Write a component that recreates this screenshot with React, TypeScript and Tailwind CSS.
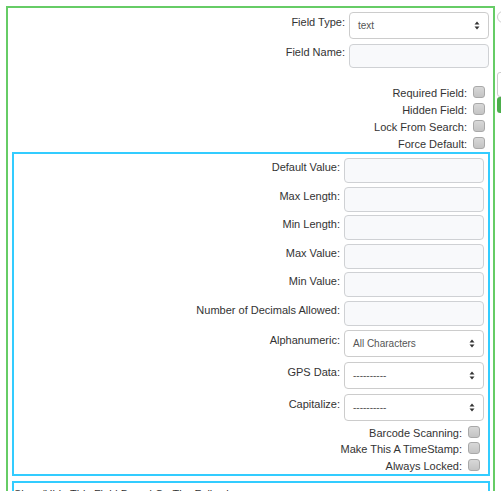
import React from "react";

const font = { fontFamily: '"Liberation Sans", Arial, sans-serif' };

function Arrow() {
  return (
    <svg width="6" height="9" viewBox="0 0 6 9" className="shrink-0">
      <path d="M3 0.5 L5.5 3.5 L0.5 3.5 Z" fill="#333" />
      <path d="M3 8.5 L5.5 5.5 L0.5 5.5 Z" fill="#333" />
    </svg>
  );
}

function Select({ value, h = "h-[27.5px]" }: { value: string; h?: string }) {
  return (
    <div
      className={`w-[140px] ${h} shrink-0 bg-white border border-[#cccccc] rounded-[4px] flex items-center justify-between pl-[8px] pr-[8px] text-[10px] text-[#555]`}
    >
      <span>{value}</span>
      <Arrow />
    </div>
  );
}

function Input() {
  return (
    <div className="w-[140px] h-[25px] shrink-0 bg-[#f8f9fb] border border-[#cfd1d4] rounded-[4px]" />
  );
}

function Check() {
  return (
    <div className="w-[12px] h-[12px] mt-[3px] shrink-0 rounded-[3px] border border-[#a9a9a9] bg-gradient-to-b from-[#d8d8d8] to-[#c4c4c4]" />
  );
}

function FieldRow({ label, children, pt = "pt-[3px]" }: { label: string; children: React.ReactNode; pt?: string }) {
  return (
    <div className="flex justify-end items-start gap-[4px]">
      <span className={`${pt} leading-[13px]`}>{label}</span>
      {children}
    </div>
  );
}

function CheckRow({ label, h = "h-[17px]" }: { label: string; h?: string }) {
  return (
    <div className={`flex justify-end items-start gap-[6px] ${h}`}>
      <span className="pt-[4px] leading-[13px]">{label}</span>
      <Check />
    </div>
  );
}

export default function App() {
  return (
    <div
      className="w-[501px] h-[491px] overflow-hidden bg-white flex pt-[6px] pl-[6px] text-[11px] text-[#333]"
      style={font}
    >
      <div className="w-[489px] h-[600px] shrink-0 border-2 border-[#66cc66] flex flex-col">
        <div className="pt-[4px] pr-[4px] flex flex-col">
          <FieldRow label="Field Type:" pt="pt-[4px]">
            <Select value="text" h="h-[27px]" />
          </FieldRow>
          <div className="mt-[5px]">
            <FieldRow label="Field Name:" pt="pt-[2px]">
              <div className="w-[140px] h-[24px] shrink-0 bg-[#f8f9fb] border border-[#cfd1d4] rounded-[4px]" />
            </FieldRow>
          </div>
        </div>
        <div className="mt-[15px] pr-[8px] flex flex-col">
          <CheckRow label="Required Field:" />
          <CheckRow label="Hidden Field:" />
          <CheckRow label="Lock From Search:" />
          <CheckRow label="Force Default:" />
        </div>
        <div className="mt-[1px] ml-[4px] mr-[3px] border-2 border-[#33ccff] pt-[4px] pb-[1.5px] flex flex-col">
          <div className="pr-[4px] flex flex-col gap-[3.6px]">
            <FieldRow label="Default Value:">
              <Input />
            </FieldRow>
            <FieldRow label="Max Length:">
              <Input />
            </FieldRow>
            <FieldRow label="Min Length:">
              <Input />
            </FieldRow>
            <FieldRow label="Max Value:">
              <Input />
            </FieldRow>
            <FieldRow label="Min Value:">
              <Input />
            </FieldRow>
            <FieldRow label="Number of Decimals Allowed:">
              <Input />
            </FieldRow>
          </div>
          <div className="mt-[4px] pr-[4px] flex flex-col gap-[4.3px]">
            <FieldRow label="Alphanumeric:" pt="pt-[4px]">
              <Select value="All Characters" />
            </FieldRow>
            <FieldRow label="GPS Data:" pt="pt-[4px]">
              <Select value="----------" />
            </FieldRow>
            <FieldRow label="Capitalize:" pt="pt-[4px]">
              <Select value="----------" />
            </FieldRow>
          </div>
          <div className="mt-[1.5px] pr-[8px] flex flex-col">
            <CheckRow label="Barcode Scanning:" h="h-[16.5px]" />
            <CheckRow label="Make This A TimeStamp:" h="h-[16.5px]" />
            <CheckRow label="Always Locked:" h="h-[16.5px]" />
          </div>
        </div>
        <div className="mt-[5px] ml-[4px] mr-[3px] border-2 border-[#33ccff] pt-[3px] h-[100px]">
          <span className="leading-[13px]">Show/Hide This Field Based On The Following:</span>
        </div>
      </div>
      <div className="ml-[2px] w-[10px] shrink-0 flex flex-col">
        <div className="mt-[5px] w-[12px] h-[12px] rounded-full border border-[#cccccc]" />
        <div className="mt-[49px] h-[25px] border border-[#cccccc] rounded-l-[3px] bg-white" />
        <div className="h-[16px] bg-[#4cae4c] rounded-l-[3px]" />
      </div>
    </div>
  );
}
